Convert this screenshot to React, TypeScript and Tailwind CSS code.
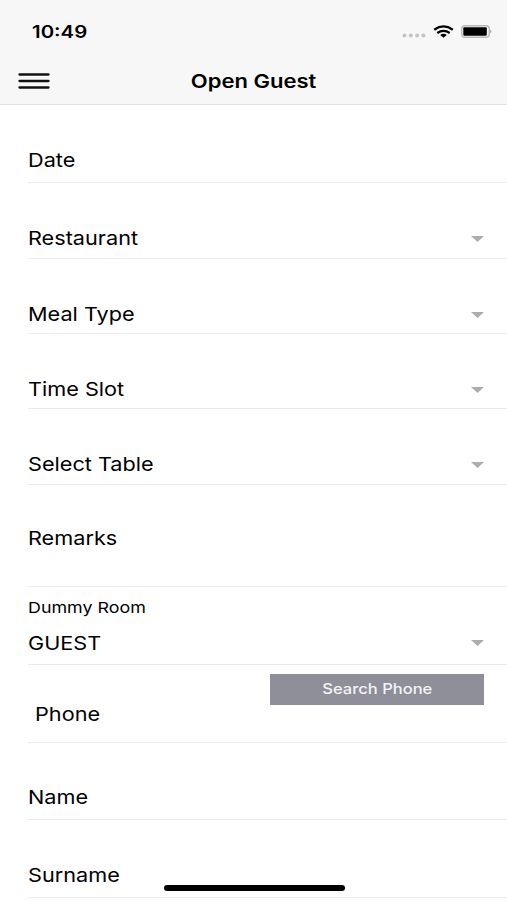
import React from 'react';

interface FieldProps {
  label: string;
  className: string;
  select?: boolean;
}

const Caret: React.FC = () => (
  <svg className="mr-[23px] h-[6px] w-[13px]" viewBox="0 0 13 6" fill="#adadad">
    <path d="M0 0h13L6.500 6z" />
  </svg>
);

const Field: React.FC<FieldProps> = ({ label, className, select }) => (
  <div className={`ml-7 flex items-end justify-between border-b border-[#ebebeb] ${className}`}>
    <span className="origin-left scale-x-[1.14] text-[19px] leading-6">{label}</span>
    {select && <div className="flex h-6 items-center"><Caret /></div>}
  </div>
);

const StatusBar: React.FC = () => (
  <div className="flex h-[57px] items-center justify-between pt-1 pr-[15px] pl-8">
    <span className="origin-left scale-x-[1.2] pt-1 text-[17px] font-semibold">10:49</span>
    <div className="flex items-center gap-[7px] pt-px">
      <svg className="mt-2 h-[5px] w-6" viewBox="0 0 24 5" fill="#c4c4c4">
        <circle cx="2.500" cy="2.500" r="2" />
        <circle cx="8.800" cy="2.500" r="2" />
        <circle cx="15.100" cy="2.500" r="2" />
        <circle cx="21.400" cy="2.500" r="2" />
      </svg>
      <svg className="h-[13px] w-[21px]" viewBox="0 0 21 13" fill="none" stroke="#000" strokeWidth="2.300">
        <path d="M1.200 4.700Q10.500-1.800 19.800 4.700M4.300 8Q10.500 3.800 16.700 8" />
        <path d="M7.200 9.900Q10.500 7.800 13.800 9.900L10.500 12.800z" fill="#000" stroke="none" />
      </svg>
      <svg className="h-[13px] w-[31px]" viewBox="0 0 31 13">
        <rect x=".7" y=".7" width="27.600" height="11.600" rx="3.300" fill="none" stroke="#b8b8b8" strokeWidth="1.400" />
        <rect x="2.300" y="2.200" width="23.500" height="8.600" rx="1" />
        <path d="M29 4.500q3 2 0 4z" fill="#b0b0b0" />
      </svg>
    </div>
  </div>
);

export default function App() {
  return (
    <div className="relative h-[900px] overflow-hidden bg-white font-['Inter','Liberation_Sans',sans-serif] text-black">
      <header className="h-[105px] border-b border-[#e2e2e2] bg-[#f7f7f7]">
        <StatusBar />
        <div className="grid h-12 grid-cols-3 items-center">
          <button className="ml-[18px] w-8" aria-label="Menu">
            <svg className="h-4 w-8" viewBox="0 0 32 16" stroke="#111" strokeWidth="2.300" strokeLinecap="round">
              <path d="M1.500 1.500h29M1.500 8h29M1.500 14.500h29" />
            </svg>
          </button>
          <h1 className="scale-x-[1.19] pt-0.5 text-center text-[18.500px] font-semibold whitespace-nowrap">Open Guest</h1>
        </div>
      </header>
      <main>
        <Field label="Date" className="h-[78px] pb-[9px]" />
        <Field label="Restaurant" className="h-[76px] pb-[7px]" select />
        <Field label="Meal Type" className="h-[75px] pb-[6px]" select />
        <Field label="Time Slot" className="h-[75px] pb-[6px]" select />
        <Field label="Select Table" className="h-[76px] pb-[7px]" select />
        <Field label="Remarks" className="h-[102px] pb-[35px]" />
        <div className="ml-7 h-[78px] border-b border-[#ebebeb] pt-[11px]">
          <div className="origin-left scale-x-[1.19] text-[15px] leading-5">Dummy Room</div>
          <div className="mt-[13px] flex items-center justify-between">
            <span className="origin-left translate-y-[0.5px] scale-x-[1.14] text-[19px] leading-6">GUEST</span>
            <Caret />
          </div>
        </div>
        <div className="ml-7 flex h-[78px] justify-between border-b border-[#ebebeb]">
          <span className="mt-[38px] ml-[7px] origin-left scale-x-[1.14] text-[19px] leading-6">Phone</span>
          <button className="mt-[9px] mr-[23px] h-[31px] w-[214px] bg-[#8f8f99] pb-px text-[14.500px] font-medium text-[#f4f4f6]">
            <span className="inline-block scale-x-[1.14]">Search Phone</span>
          </button>
        </div>
        <Field label="Name" className="h-[77px] pb-[9px]" />
        <Field label="Surname" className="h-[78px] pb-[9px]" />
      </main>
      <div className="absolute top-[885px] left-[164px] h-[6px] w-[181px] rounded-full bg-black" />
    </div>
  );
}
